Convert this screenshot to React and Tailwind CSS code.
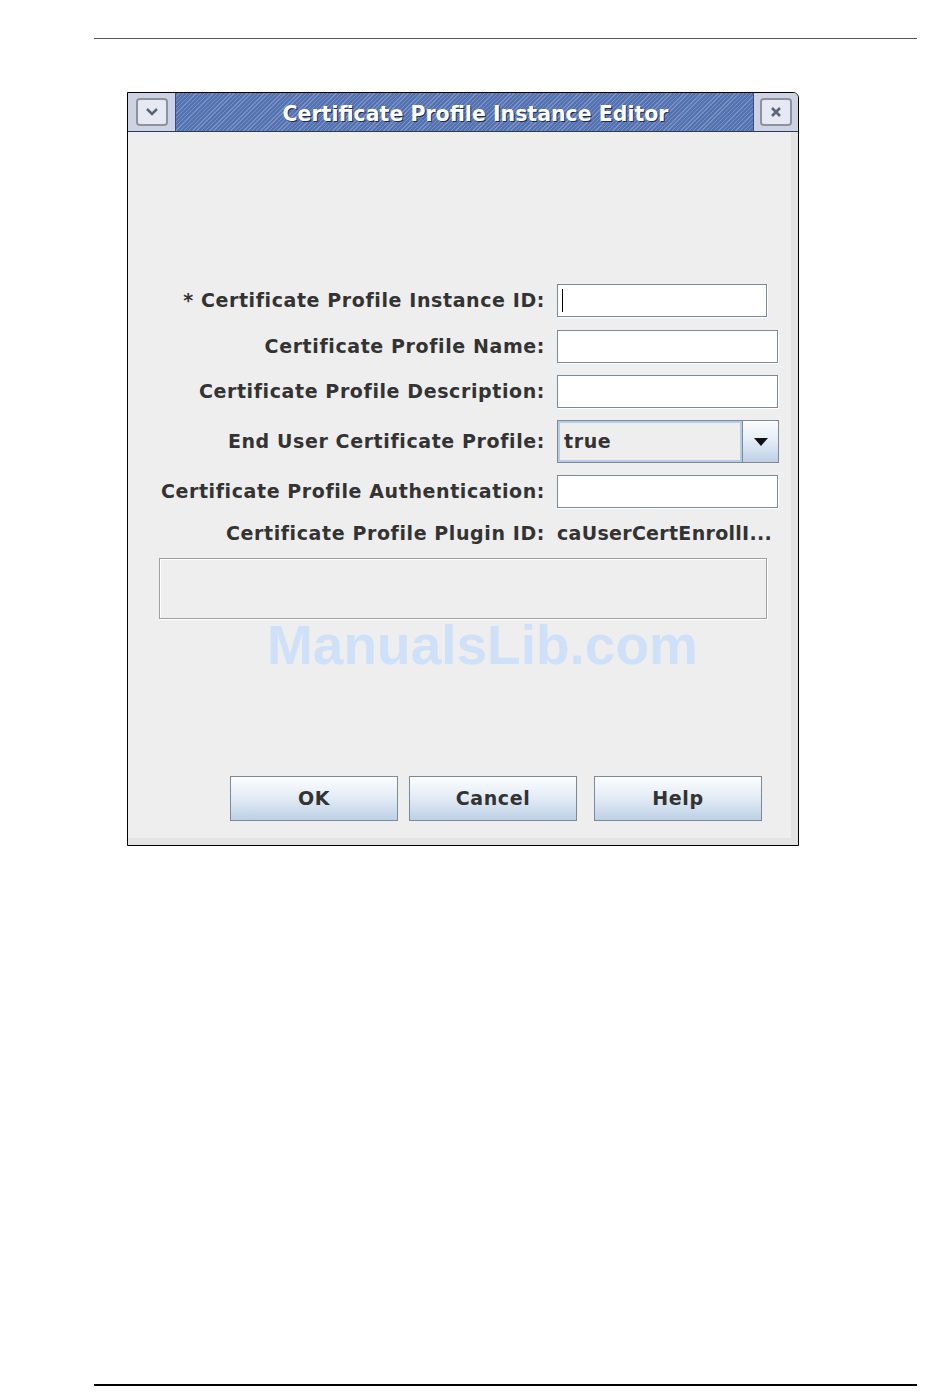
import React from "react";

const FONT = "font-['DejaVu_Sans',sans-serif]";

function Field({ width, caret }) {
  return (
    <div
      className={`relative h-[33px] ${width} bg-white border border-[#7a8a99] shadow-[1px_1px_0_#ffffff]`}
    >
      {caret && <div className="absolute left-[4px] top-[4px] bottom-[4px] w-px bg-black" />}
    </div>
  );
}

function Row({ label, mt, children }) {
  return (
    <div className={`flex items-center ${mt}`}>
      <div className={`w-[410px] text-right text-[19px] tracking-[0.6px] font-bold text-[#333333] ${FONT}`}>
        {label}
      </div>
      <div className="ml-[12px]">{children}</div>
    </div>
  );
}

function Button({ label, className }) {
  return (
    <div
      className={`h-[45px] w-[168px] flex items-center justify-center border border-[#7a8a99] bg-linear-to-b from-[#fcfdfe] via-[#e2ebf5] to-[#bdd0e5] text-[19px] tracking-[0.6px] font-bold text-[#333333] ${FONT} ${className}`}
    >
      {label}
    </div>
  );
}

export default function App() {
  return (
    <div className="relative w-[950px] h-[1398px] bg-white flex flex-col">
      {/* page rule */}
      <div className="mt-[38px] ml-[94px] w-[823px] h-px bg-[#555555]" />

      {/* dialog */}
      <div className="mt-[53px] ml-[127px] w-[672px] h-[754px] border border-black rounded-tr-[6px] flex flex-col bg-[#eeeeee]">
        {/* title bar */}
        <div className="h-[39px] flex border-b border-[#2c3a5c]">
          <div className="w-[47px] bg-[#cdd3e2] flex items-center justify-center">
            <div className="w-[32px] h-[28px] rounded-[4px] border-2 border-[#8d929c] bg-[#e6e9f4] flex items-center justify-center">
              <svg width="14" height="10" viewBox="0 0 14 10">
                <path d="M2 2 L7 7 L12 2" fill="none" stroke="#5b6478" strokeWidth="2.5" />
              </svg>
            </div>
          </div>
          <div className="flex-1 border-x border-[#3b4d7c] bg-[#5874b2] bg-[repeating-linear-gradient(135deg,#5572b0_0px,#5572b0_2px,#7890c4_2px,#7890c4_3px)] flex items-center justify-center pl-[22px] pt-[5px]">
            <span
              className={`text-white font-bold text-[20.5px] ${FONT} [text-shadow:1px_1px_0_#1e2a48]`}
            >
              Certificate Profile Instance Editor
            </span>
          </div>
          <div className="w-[44px] bg-[#cdd3e2] rounded-tr-[5px] flex items-center justify-center">
            <div className="w-[32px] h-[28px] rounded-[4px] border-2 border-[#8d929c] bg-[#e6e9f4] flex items-center justify-center">
              <svg width="12" height="12" viewBox="0 0 12 12">
                <path d="M2 2 L10 10 M10 2 L2 10" stroke="#5b6478" strokeWidth="2.6" />
              </svg>
            </div>
          </div>
        </div>

        {/* body */}
        <div className="flex-1 flex flex-col pl-[7px] border-r-[7px] border-b-[7px] border-[#e3e3e3] border-l-0 border-t-0">
          <Row label="* Certificate Profile Instance ID:" mt="mt-[152px]">
            <Field width="w-[210px]" caret />
          </Row>
          <Row label="Certificate Profile Name:" mt="mt-[13px]">
            <Field width="w-[221px]" />
          </Row>
          <Row label="Certificate Profile Description:" mt="mt-[12px]">
            <Field width="w-[221px]" />
          </Row>
          <Row label="End User Certificate Profile:" mt="mt-[12px]">
            <div className="w-[222px] h-[43px] flex border border-[#7a8a99]">
              <div
                className={`flex-1 flex items-center pl-[4px] border-2 border-[#b5cce5] bg-[#eeeeee] text-[19px] tracking-[0.6px] font-bold text-[#333333] ${FONT}`}
              >
                true
              </div>
              <div className="w-[36px] border-l border-[#7a8a99] bg-linear-to-b from-[#fcfdfe] via-[#e2ebf5] to-[#bdd0e5] flex items-center justify-center">
                <svg width="14" height="8" viewBox="0 0 14 8">
                  <path d="M0 0 H14 L7 8 Z" fill="#111111" />
                </svg>
              </div>
            </div>
          </Row>
          <Row label="Certificate Profile Authentication:" mt="mt-[12px]">
            <Field width="w-[221px]" />
          </Row>
          <Row label="Certificate Profile Plugin ID:" mt="mt-[10px]">
            <div
              className={`h-[30px] flex items-center text-[19px] tracking-[0.3px] font-bold text-[#333333] ${FONT}`}
            >
              caUserCertEnrollI...
            </div>
          </Row>

          <div className="mt-[10px] ml-[24px] w-[608px] h-[61px] border border-[#a0a0a0] shadow-[inset_1px_1px_0_#ffffff,1px_1px_0_#ffffff]" />

          <div className="mt-[157px] flex">
            <Button label="OK" className="ml-[95px]" />
            <Button label="Cancel" className="ml-[11px]" />
            <Button label="Help" className="ml-[17px]" />
          </div>
        </div>
      </div>

      {/* watermark */}
      <div className="absolute left-0 w-[965px] top-[618px] text-center text-[55px] font-bold text-[#cfe1f8] font-['Liberation_Sans',Arial,sans-serif] leading-none pointer-events-none">
        ManualsLib.com
      </div>

      {/* bottom rule */}
      <div className="mt-auto mb-[12px] ml-[94px] w-[823px] h-[2px] bg-black" />
    </div>
  );
}
